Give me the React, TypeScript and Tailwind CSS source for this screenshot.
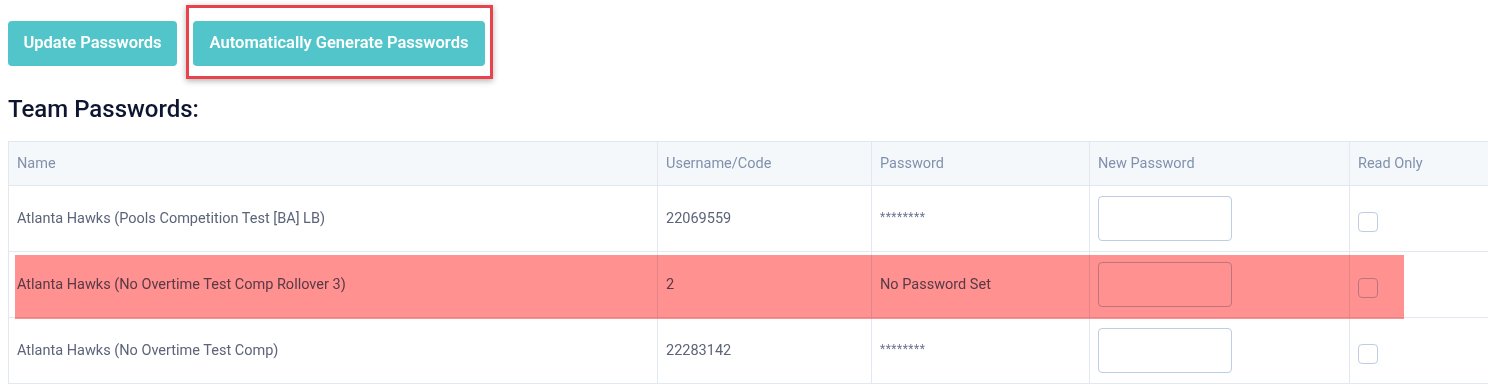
import React from "react";

const rows = [
  { name: "Atlanta Hawks (Pools Competition Test [BA] LB)", code: "22069559", pw: "********" },
  { name: "Atlanta Hawks (No Overtime Test Comp Rollover 3)", code: "2", pw: "No Password Set" },
  { name: "Atlanta Hawks (No Overtime Test Comp)", code: "22283142", pw: "********" },
];

export default function App() {
  return (
    <div className="relative w-[1488px] h-[386px] overflow-hidden bg-white font-['Roboto',sans-serif]">
      <div className="flex gap-4 pl-2 pt-[21px]">
        <button className="h-[45px] w-[169px] rounded-[4px] bg-[#51c5c9] text-[16.5px] font-semibold text-white">
          Update Passwords
        </button>
        <button className="h-[45px] w-[292px] rounded-[4px] bg-[#51c5c9] text-[16.5px] font-semibold text-white">
          Automatically Generate Passwords
        </button>
      </div>
      <h2 className="pl-2 mt-[29px] text-[24px] leading-[28px] font-medium text-[#0d1530]">Team Passwords:</h2>
      <div className="pl-2 mt-[18px]">
        <table className="border-collapse text-[14.5px] text-[#5b6478] table-fixed w-[1532px]">
          <colgroup>
            <col className="w-[649px]" />
            <col className="w-[214px]" />
            <col className="w-[218px]" />
            <col className="w-[260px]" />
            <col className="w-[191px]" />
          </colgroup>
          <thead>
            <tr className="h-[44px] bg-[#f5f8fb] text-[#8191ad]">
              {["Name", "Username/Code", "Password", "New Password", "Read Only"].map((h) => (
                <th key={h} className="border border-[#e2e8f0] px-2 text-left font-normal">
                  {h}
                </th>
              ))}
            </tr>
          </thead>
          <tbody>
            {rows.map((r) => (
              <tr key={r.code} className="h-[66px]">
                <td className="border border-[#e2e8f0] px-2">{r.name}</td>
                <td className="border border-[#e2e8f0] px-2">{r.code}</td>
                <td className="border border-[#e2e8f0] px-2">
                  {r.pw.startsWith("*") ? <span className="relative -top-[2px] text-[12px] tracking-[0.5px] text-[#6b7390]">{r.pw}</span> : r.pw}
                </td>
                <td className="border border-[#e2e8f0] px-2">
                  <div className="h-[45px] w-[134px] rounded-[4px] border border-[#bccee0] bg-white" />
                </td>
                <td className="border border-[#e2e8f0] px-2">
                  <div className="mt-[6px] h-[20px] w-[20px] rounded-[4px] border border-[#bccee0] bg-white" />
                </td>
              </tr>
            ))}
          </tbody>
        </table>
      </div>
      <div className="absolute left-[15px] top-[255px] h-[64px] w-[1389px] bg-[#ff9191] mix-blend-multiply" />
      <div className="absolute left-[186px] top-[5px] h-[74px] w-[307px] border-[3px] border-[#e8434a] shadow-[0_2px_6px_rgba(0,0,0,0.3)]" />
    </div>
  );
}
